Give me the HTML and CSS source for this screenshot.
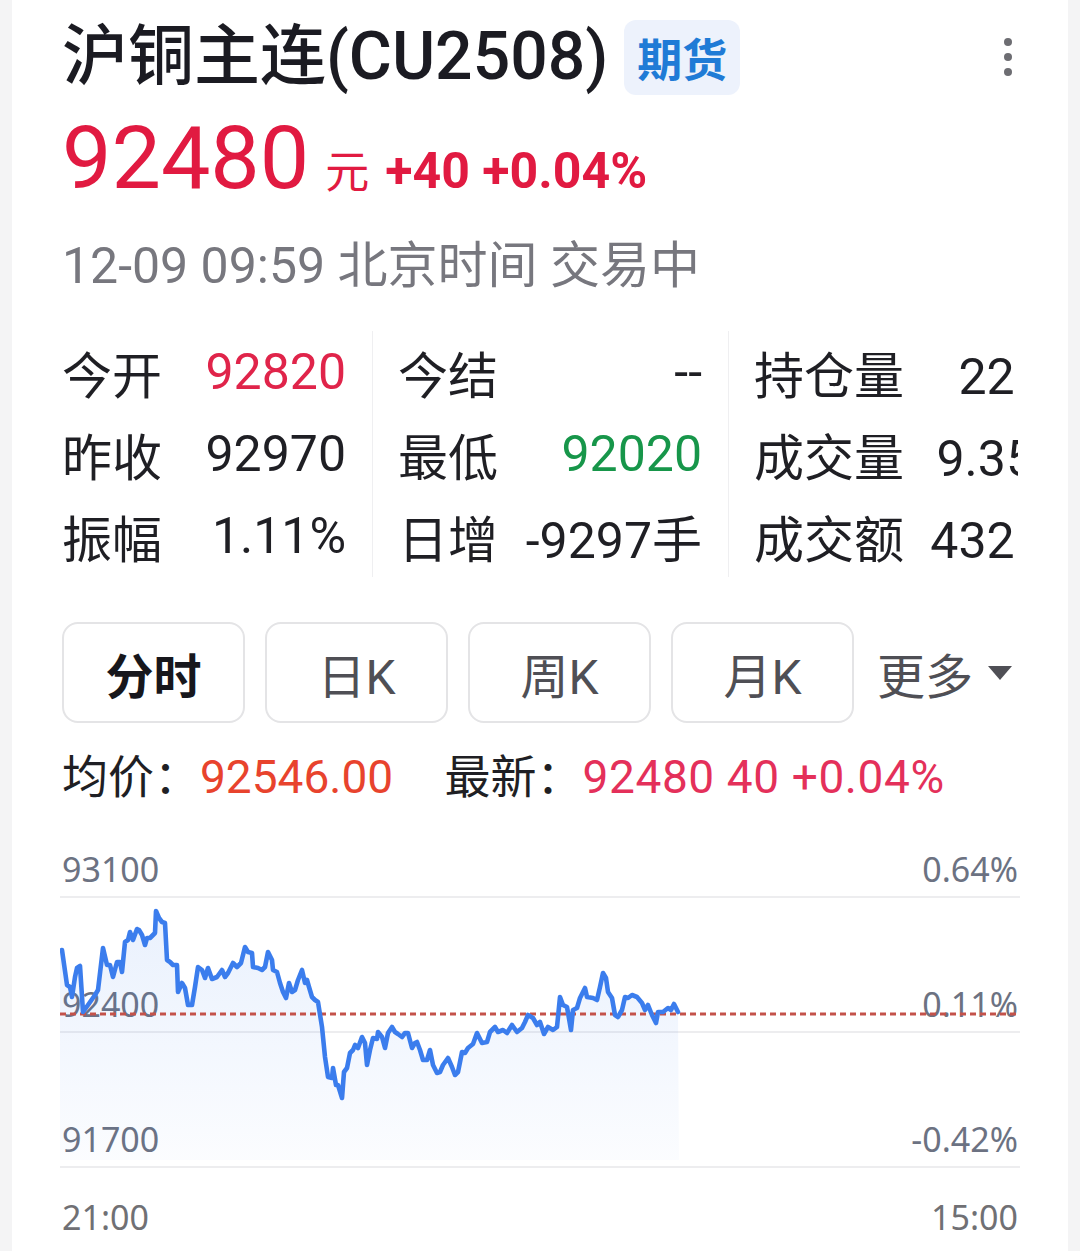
FILE: index.html
```html
<!DOCTYPE html>
<html lang="zh-CN">
<head>
<meta charset="utf-8">
<title>沪铜主连(CU2508)</title>
<link rel="stylesheet" href="styles.css">
</head>
<body>
<div class="panel">
  <header class="title-row">
    <div class="title-left">
      <h1 class="title">沪铜主连(CU2508)</h1>
      <span class="badge">期货</span>
    </div>
    <div class="kebab"><i></i><i></i><i></i></div>
  </header>

  <div class="price-row">
    <span class="price">92480</span>
    <span class="unit">元</span>
    <span class="change">+40 +0.04%</span>
  </div>

  <div class="time-row">12-09 09:59 北京时间 交易中</div>

  <section class="stats">
    <div class="col col1">
      <span class="lbl">今开</span><span class="val up">92820</span>
      <span class="lbl">昨收</span><span class="val">92970</span>
      <span class="lbl">振幅</span><span class="val">1.11%</span>
    </div>
    <div class="col col2">
      <span class="lbl">今结</span><span class="val">--</span>
      <span class="lbl">最低</span><span class="val down">92020</span>
      <span class="lbl">日增</span><span class="val">-9297手</span>
    </div>
    <div class="col col3">
      <span class="lbl">持仓量</span><span class="val">22.67万</span>
      <span class="lbl">成交量</span><span class="val">9.35万手</span>
      <span class="lbl">成交额</span><span class="val">432.76亿</span>
    </div>
  </section>

  <nav class="tabs">
    <button class="tab active">分时</button>
    <button class="tab">日K</button>
    <button class="tab">周K</button>
    <button class="tab">月K</button>
    <div class="more">更多<span class="caret"></span></div>
  </nav>

  <div class="avg-row">
    <span class="k">均价：</span><span class="avg">92546.00</span>
    <span class="k k2">最新：</span><span class="last">92480 40 +0.04%</span>
  </div>

  <section class="chart">
    <div class="band band-top"><span>93100</span><span>0.64%</span></div>
    <div class="band"><span>92400</span><span>0.11%</span></div>
    <div class="band"><span>91700</span><span>-0.42%</span></div>
    <div class="xaxis"><span>21:00</span><span>15:00</span></div>
    <svg class="plot" viewBox="60 807 960 370" width="960" height="370" aria-hidden="true">
      <defs>
        <linearGradient id="fill" x1="0" y1="0" x2="0" y2="1">
          <stop offset="0" stop-color="#3b7ded" stop-opacity="0.11"/>
          <stop offset="1" stop-color="#3b7ded" stop-opacity="0.02"/>
        </linearGradient>
      </defs>
      <polygon fill="url(#fill)" points="60,950 62,950 67,985 70,987 72,997 75,977 77,968 80,966 83,1012 88,1005 95,995 98,990 103,948 107,965 110,965 113,977 117,962 120,962 122,972 125,942 128,940 130,932 133,940 137,929 139,930 142,935 145,945 147,938 150,938 155,933 156,911 159,918 162,922 165,923 167,960 170,962 173,965 177,965 178,992 182,983 185,988 188,1005 192,1005 195,987 198,967 202,970 205,978 208,968 212,979 217,977 222,970 225,977 228,973 233,963 237,967 241,963 245,947 248,952 252,953 253,967 258,968 262,970 265,967 268,952 272,960 273,970 277,972 280,983 283,992 286,998 289,983 292,992 295,990 298,980 302,970 305,983 307,980 309,987 312,997 315,1000 318,1002 322,1027 325,1057 328,1077 332,1078 333,1068 336,1085 338,1085 342,1098 344,1072 347,1068 350,1053 353,1050 355,1045 358,1048 362,1037 365,1043 367,1065 370,1050 373,1038 377,1039 378,1032 382,1037 385,1048 388,1033 392,1027 395,1032 398,1034 402,1037 405,1033 408,1033 412,1048 415,1043 417,1042 420,1050 423,1060 427,1060 430,1050 433,1065 437,1073 440,1072 443,1065 448,1058 452,1067 455,1075 458,1072 462,1052 465,1053 468,1048 473,1044 477,1033 482,1043 487,1042 490,1032 495,1027 498,1032 503,1030 507,1033 512,1025 517,1032 522,1028 525,1022 528,1015 533,1018 537,1025 540,1022 544,1034 548,1027 553,1030 557,1027 560,997 563,1005 567,1007 571,1030 573,1010 577,1008 580,998 585,988 587,997 593,998 597,1000 600,987 603,973 606,978 608,992 612,998 615,1015 618,1017 622,1010 625,997 628,998 632,995 637,997 642,1003 645,1010 648,1005 652,1015 656,1023 658,1012 663,1012 668,1008 671,1010 674,1004 678,1012 679,1160 60,1160"/>
      <line x1="60" y1="1014" x2="1020" y2="1014" stroke="#c4524a" stroke-width="3.2" stroke-dasharray="6 4"/>
      <polyline fill="none" stroke="#3b7ded" stroke-width="4.6" stroke-linejoin="round" stroke-linecap="round" points="62,950 67,985 70,987 72,997 75,977 77,968 80,966 83,1012 88,1005 95,995 98,990 103,948 107,965 110,965 113,977 117,962 120,962 122,972 125,942 128,940 130,932 133,940 137,929 139,930 142,935 145,945 147,938 150,938 155,933 156,911 159,918 162,922 165,923 167,960 170,962 173,965 177,965 178,992 182,983 185,988 188,1005 192,1005 195,987 198,967 202,970 205,978 208,968 212,979 217,977 222,970 225,977 228,973 233,963 237,967 241,963 245,947 248,952 252,953 253,967 258,968 262,970 265,967 268,952 272,960 273,970 277,972 280,983 283,992 286,998 289,983 292,992 295,990 298,980 302,970 305,983 307,980 309,987 312,997 315,1000 318,1002 322,1027 325,1057 328,1077 332,1078 333,1068 336,1085 338,1085 342,1098 344,1072 347,1068 350,1053 353,1050 355,1045 358,1048 362,1037 365,1043 367,1065 370,1050 373,1038 377,1039 378,1032 382,1037 385,1048 388,1033 392,1027 395,1032 398,1034 402,1037 405,1033 408,1033 412,1048 415,1043 417,1042 420,1050 423,1060 427,1060 430,1050 433,1065 437,1073 440,1072 443,1065 448,1058 452,1067 455,1075 458,1072 462,1052 465,1053 468,1048 473,1044 477,1033 482,1043 487,1042 490,1032 495,1027 498,1032 503,1030 507,1033 512,1025 517,1032 522,1028 525,1022 528,1015 533,1018 537,1025 540,1022 544,1034 548,1027 553,1030 557,1027 560,997 563,1005 567,1007 571,1030 573,1010 577,1008 580,998 585,988 587,997 593,998 597,1000 600,987 603,973 606,978 608,992 612,998 615,1015 618,1017 622,1010 625,997 628,998 632,995 637,997 642,1003 645,1010 648,1005 652,1015 656,1023 658,1012 663,1012 668,1008 671,1010 674,1004 678,1012"/>
    </svg>
  </section>
</div>
</body>
</html>
```

FILE: styles.css
```css
html, body {
  margin: 0;
  padding: 0;
}

body {
  background: #f4f4f5;
  font-family: Roboto, "Noto Sans CJK SC", sans-serif;
  color: #1c1c21;
}

.panel {
  margin: 0 12px;
  background: #ffffff;
  min-height: 1251px;
  padding: 17px 50px 0;
  box-sizing: border-box;
  overflow: hidden;
}

/* title */
.title-row {
  display: flex;
  align-items: center;
  justify-content: space-between;
  height: 80px;
}

.title-left {
  display: flex;
  align-items: center;
  gap: 16px;
}

.title {
  margin: 0;
  font-size: 66px;
  font-weight: 500;
  line-height: 80px;
  color: #1b1b22;
}

.badge {
  display: inline-flex;
  align-items: center;
  justify-content: center;
  width: 116px;
  height: 75px;
  border-radius: 12px;
  background: #edf2fc;
  color: #1f7bd6;
  font-size: 45px;
  font-weight: 700;
}

.kebab {
  display: flex;
  flex-direction: column;
  gap: 7px;
  margin-right: 6px;
}

.kebab i {
  display: block;
  width: 8px;
  height: 8px;
  border-radius: 50%;
  background: #6d6d72;
}

/* price */
.price-row {
  display: flex;
  align-items: baseline;
  margin-top: 11px;
  line-height: 100px;
  color: #e11a41;
}

.price {
  font-size: 88px;
  font-weight: 400;
}

.unit {
  font-size: 44px;
  margin-left: 16px;
}

.change {
  font-size: 50px;
  font-weight: 700;
  margin-left: 16px;
}

.time-row {
  margin-top: 13px;
  font-size: 50px;
  line-height: 60px;
  color: #77777e;
}

/* stats */
.stats {
  display: flex;
  margin-top: 35px;
  overflow: hidden;
  font-size: 50px;
}

.col {
  display: grid;
  grid-template-columns: auto 1fr;
  grid-auto-rows: 82px;
  align-items: center;
  flex-shrink: 0;
  box-sizing: border-box;
}

.col1 {
  width: 311px;
  padding-right: 26px;
  border-right: 1px solid #efeff1;
}

.col2 {
  width: 356px;
  padding: 0 26px 0 25px;
  border-right: 1px solid #efeff1;
}

.col3 {
  width: 405px;
  padding-left: 25px;
}

.lbl {
  color: #1f1f24;
}

.val {
  text-align: right;
  color: #1f1f24;
  white-space: nowrap;
}

.val.up {
  color: #e0244a;
}

.val.down {
  color: #17964a;
}

/* tabs */
.tabs {
  display: flex;
  align-items: center;
  gap: 20px;
  margin-top: 45px;
}

.tab {
  width: 183px;
  height: 101px;
  box-sizing: border-box;
  border: 2px solid #e4e4e6;
  border-radius: 16px;
  background: #ffffff;
  font-family: Roboto, "Noto Sans CJK SC", sans-serif;
  font-size: 48px;
  color: #4f4f55;
  padding: 0;
}

.tab.active {
  color: #17171c;
  font-weight: 700;
}

.more {
  display: flex;
  align-items: center;
  margin-left: 3px;
  font-size: 48px;
  color: #4f4f55;
}

.caret {
  width: 0;
  height: 0;
  margin-left: 15px;
  border-left: 12px solid transparent;
  border-right: 12px solid transparent;
  border-top: 14px solid #4f4f55;
}

/* avg row */
.avg-row {
  margin-top: 24px;
  font-size: 46px;
  line-height: 60px;
  white-space: nowrap;
}

.k {
  color: #1f1f24;
}

.k2 {
  margin-left: 40px;
}

.avg {
  color: #e8432d;
}

.last {
  color: #e4305a;
  letter-spacing: 0.6px;
}

/* chart */
.chart {
  position: relative;
  margin: 0 -2px;
  width: 960px;
  font-family: "Noto Sans", "Noto Sans CJK SC", sans-serif;
  font-size: 34px;
  line-height: 34px;
  color: #6c7282;
}

.band {
  display: flex;
  justify-content: space-between;
  align-items: flex-end;
  box-sizing: border-box;
  height: 135px;
  padding: 0 2px 10px;
  border-bottom: 2px solid #ededef;
}

.band-top {
  height: 91px;
}

.xaxis {
  display: flex;
  justify-content: space-between;
  padding: 32px 2px 0;
  color: #707074;
}

.plot {
  position: absolute;
  left: 0;
  top: 0;
}
```
